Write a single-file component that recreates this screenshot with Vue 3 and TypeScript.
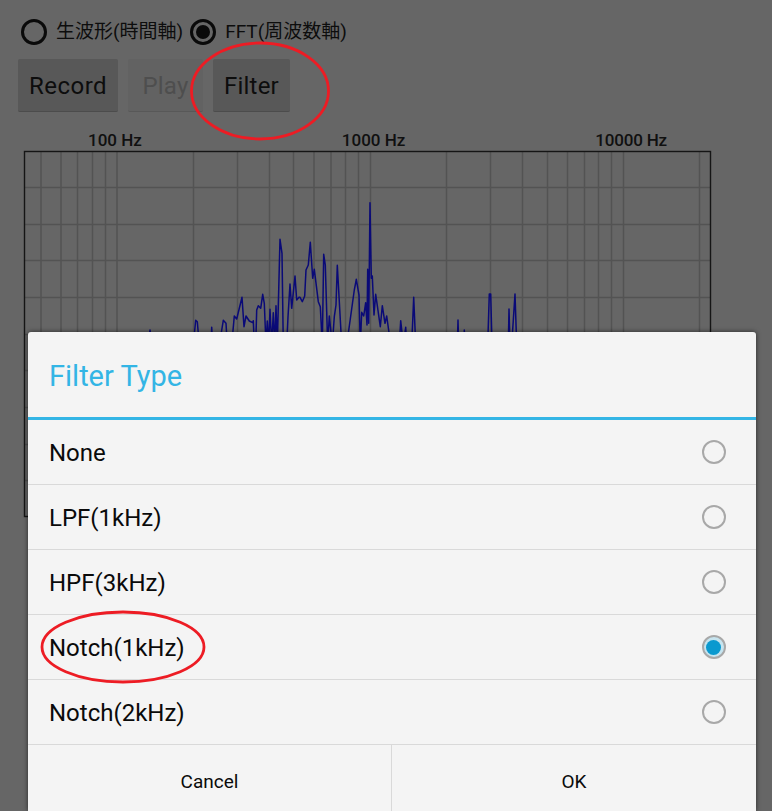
<script setup lang="ts">
const top = 150
const vLines = [41, 61, 77.5, 92.5, 105.5, 117, 193.5, 237.5, 269.5, 293.5, 314, 331, 345.5, 358.5, 370.5, 446.5, 490.5, 522.5, 547.5, 567.5, 584.5, 598.5, 611.5, 623.5, 699.5]
const hLines = [187.5, 224.5, 260.5, 297.5, 334.5, 370.5, 407.5, 444.5, 480.5].map((y) => y - top)
const labels = ['100 Hz', '1000 Hz', '10000 Hz']
const rows = [
  { label: 'None', on: false },
  { label: 'LPF(1kHz)', on: false },
  { label: 'HPF(3kHz)', on: false },
  { label: 'Notch(1kHz)', on: true },
  { label: 'Notch(2kHz)', on: false },
]
// spectrum traced from the reference
const lead: number[][] = [[148,333],[150,330],[152,333]]
const a: number[][] = [[580,574],[587,541],[592,545],[598,574],[633,574],[635,562],[638,574],[658,574],[670,541],[678,550],[682,574],[695,574],[703,528],[710,537],[726,472],[732,560],[738,528],[748,543],[758,548],[760,542],[763,574],[767,574],[770,510],[775,497],[782,505],[788,463],[793,490],[798,574],[802,543],[806,574],[810,508],[815,574],[820,518],[824,574],[828,497],[832,574],[840,298],[846,340],[850,574],[860,574],[864,530],[870,432],[875,505],[885,408],[890,480],[897,472]]
const b: number[][] = [[0,322],[7,335],[14,318],[18,240],[25,225],[31,157],[38,265],[43,238],[55,335],[61,350],[67,425],[71,193],[76,225],[83,425],[88,378],[97,425],[103,380],[108,345],[112,226],[125,425],[140,425],[163,300],[169,268],[177,315],[181,425],[185,367],[191,378],[197,338],[201,405],[203,238],[206,400],[210,38],[214,265],[217,258],[222,375],[227,313],[241,410],[247,347],[255,400],[260,378],[272,425],[298,425],[302,392],[310,425],[317,412],[320,425],[335,425],[341,322],[347,425]]
const c: number[][] = [[82,185],[84,150],[86,185],[102,185],[103,180],[105,185],[173,185],[178,72],[182,72],[186,185],[235,185],[237,117],[240,185],[245,185],[255,72],[260,185]]
const pts = [
  ...lead,
  ...a.map(([x, y]) => [x / 3, 140 + y / 3]),
  ...b.map(([x, y]) => [300 + x / 3, 190 + y / 3]),
  ...c.map(([x, y]) => [430 + x / 3, 270 + y / 3]),
]
// troughs run on under the dialog, so the joins between them stay hidden
const spectrum = pts
  .map(([x, y]) => `${x.toFixed(1)},${((y >= 331 ? 345 : y) - top).toFixed(1)}`)
  .join(' ')
</script>

<template>
  <div class="screen">
    <div class="modes">
      <label class="mode"><span class="dot"></span>生波形(時間軸)</label>
      <label class="mode"><span class="dot dot-on"></span>FFT(周波数軸)</label>
    </div>
    <div class="actions">
      <button class="btn btn-record">Record</button>
      <button class="btn btn-play" disabled>Play</button>
      <button class="btn btn-filter">Filter</button>
    </div>
    <div class="scale">
      <span v-for="l in labels" :key="l">{{ l }}</span>
    </div>
    <svg class="chart" width="772" height="368" viewBox="0 0 772 368" xmlns="http://www.w3.org/2000/svg" fill="none">
      <g stroke="#535353" stroke-width="1.5">
        <line v-for="x in vLines" :key="x" :x1="x" :x2="x" y1="2" y2="366" />
        <line v-for="y in hLines" :key="y" x1="25" x2="710" :y1="y" :y2="y" />
      </g>
      <rect x="24.5" y="1.5" width="686" height="365" stroke="#151515" stroke-width="1.4" />
      <polyline :points="spectrum" stroke="#0a0a78" stroke-width="1.5" stroke-linejoin="round" />
    </svg>

    <div class="dialog">
      <h2 class="title">Filter Type</h2>
      <ul class="list">
        <li v-for="r in rows" :key="r.label" class="row">
          <span>{{ r.label }}</span>
          <span class="choice" :class="{ 'choice-on': r.on }"></span>
        </li>
      </ul>
      <div class="footer">
        <button class="foot-btn foot-cancel">Cancel</button>
        <button class="foot-btn foot-ok">OK</button>
      </div>
    </div>

    <svg class="mark mark-filter" width="144" height="104" viewBox="0 0 144 104" xmlns="http://www.w3.org/2000/svg">
      <ellipse cx="72" cy="52" rx="68.5" ry="48" fill="none" stroke="#ed1c24" stroke-width="2.8" />
    </svg>
    <svg class="mark mark-notch" width="170" height="78" viewBox="0 0 170 78" xmlns="http://www.w3.org/2000/svg">
      <ellipse cx="85" cy="39" rx="81" ry="35" fill="none" stroke="#ed1c24" stroke-width="2.8" />
    </svg>
  </div>
</template>

<style>
html, body { margin: 0; background: #666; }
</style>

<style scoped>
.screen {
  position: relative;
  width: 772px;
  height: 811px;
  overflow: hidden;
  background: #666;
  color: #0d0d0d;
  font-family: Roboto, "Noto Sans CJK JP", sans-serif;
}
.modes {
  display: flex;
  align-items: center;
  gap: 7px;
  padding: 18px 0 0 21px;
  height: 27px;
}
.mode {
  display: flex;
  align-items: center;
  gap: 9px;
  font-size: 19px;
  line-height: 27px;
}
.dot {
  box-sizing: border-box;
  width: 26px;
  height: 26px;
  border: 3px solid #0a0a0a;
  border-radius: 50%;
  display: flex;
  align-items: center;
  justify-content: center;
}
.dot-on::after {
  content: "";
  width: 14px;
  height: 14px;
  border-radius: 50%;
  background: #0a0a0a;
}
.actions {
  display: flex;
  gap: 10px;
  padding: 14px 0 0 18px;
}
.btn {
  height: 53px;
  padding: 2px 0 0;
  border: 0;
  border-bottom: 1px solid #4c4c4c;
  border-radius: 2px;
  background: #585858;
  color: #0d0d0d;
  font: 24px Roboto, sans-serif;
  letter-spacing: 0.2px;
}
.btn-record { width: 100px; letter-spacing: 0.5px; }
.btn-play { width: 75px; background: #626262; color: #4e4e4e; border-bottom-color: #585858; }
.btn-filter { width: 77px; }
.scale {
  display: flex;
  height: 38px;
  padding: 18px 0 0 88px;
  box-sizing: border-box;
  font-size: 17px;
  font-weight: 500;
  line-height: 20px;
  color: #101010;
}
.scale span:nth-child(2) { margin-left: 200px; }
.scale span:nth-child(3) { margin-left: 190px; letter-spacing: -0.2px; }
.chart {
  display: block;
}
.dialog {
  position: absolute;
  left: 28px;
  top: 332px;
  width: 728px;
  height: 479px;
  display: flex;
  flex-direction: column;
  background: #f4f4f4;
  border-radius: 3px 3px 0 0;
  box-shadow: 0 0 5px rgba(0, 0, 0, 0.6);
  color: #0a0a0a;
}
.title {
  margin: 0;
  box-sizing: border-box;
  height: 88px;
  padding: 1px 0 0 21px;
  border-bottom: 3px solid #33b5e5;
  font-size: 29px;
  font-weight: 400;
  line-height: 86px;
  color: #33b5e5;
}
.list {
  margin: 0;
  padding: 0;
  list-style: none;
}
.row {
  box-sizing: border-box;
  height: 65px;
  display: flex;
  align-items: center;
  justify-content: space-between;
  padding: 0 30.5px 0 21px;
  border-bottom: 1px solid #d9d9d9;
  font-size: 24px;
  line-height: 30px;
}
.row span:first-child {
  padding-top: 2px;
}
.choice {
  box-sizing: border-box;
  width: 24px;
  height: 24px;
  border: 2px solid #a8a8a8;
  border-radius: 50%;
  display: flex;
  align-items: center;
  justify-content: center;
}
.choice-on {
  background: #c6e4ef;
}
.choice-on::after {
  content: "";
  width: 15px;
  height: 15px;
  border-radius: 50%;
  background: #0a99cf;
}
.footer {
  flex: 1;
  display: flex;
}
.foot-btn {
  padding: 6px 0 0;
  border: 0;
  background: transparent;
  color: #0a0a0a;
  font: 19px Roboto, sans-serif;
}
.foot-cancel { width: 363px; }
.foot-ok {
  flex: 1;
  border-left: 1px solid #d9d9d9;
}
.mark {
  position: absolute;
}
.mark-filter { left: 188px; top: 39px; }
.mark-notch { left: 37.5px; top: 608px; }
</style>
